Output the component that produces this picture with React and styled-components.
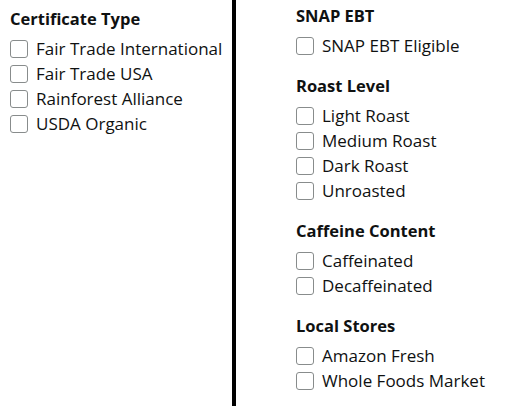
import styled, { createGlobalStyle } from 'styled-components';

const GlobalStyle = createGlobalStyle`
   body {
      margin: 0;
      background: #fff;
      font-family: "Open Sans", "Liberation Sans", sans-serif;
      color: #0f1111;
   }
`;

const Page = styled.div`
   display: flex;
   flex-direction: row;
   width: 512px;
   height: 411px;
`;

const Column = styled.div`
   display: flex;
   flex-direction: column;
   gap: 17px;
   width: ${(p) => p.width}px;
   padding-left: ${(p) => p.inset}px;
   padding-top: ${(p) => p.top}px;
   box-sizing: border-box;
`;

const Divider = styled.div`
   width: 4px;
   height: 406px;
   background: #000;
   flex-shrink: 0;
`;

const Group = styled.div`
   display: flex;
   flex-direction: column;
`;

const Heading = styled.h3`
   margin: 0 0 6px 0;
   font-size: 16.5px;
   font-weight: 700;
   line-height: 22px;
   color: #0f1111;
`;

const Option = styled.label`
   display: flex;
   flex-direction: row;
   align-items: center;
   gap: 8px;
   height: 25px;
   font-size: 17px;
   color: #0f1111;
   white-space: nowrap;
`;

const Box = styled.span`
   display: inline-block;
   width: 16px;
   height: 16px;
   border: 1px solid #888c8c;
   border-radius: 3px;
   background: #fff;
   flex-shrink: 0;
`;

const Filter = ({ title, options }) => (
   <Group>
      <Heading>{title}</Heading>
      {options.map((o) => (
         <Option key={o}>
            <Box />
            {o}
         </Option>
      ))}
   </Group>
);

const left = [
   { title: 'Certificate Type', options: ['Fair Trade International', 'Fair Trade USA', 'Rainforest Alliance', 'USDA Organic'] },
];

const right = [
   { title: 'SNAP EBT', options: ['SNAP EBT Eligible'] },
   { title: 'Roast Level', options: ['Light Roast', 'Medium Roast', 'Dark Roast', 'Unroasted'] },
   { title: 'Caffeine Content', options: ['Caffeinated', 'Decaffeinated'] },
   { title: 'Local Stores', options: ['Amazon Fresh', 'Whole Foods Market'] },
];

export default function App() {
   return (
      <>
         <GlobalStyle />
         <Page>
            <Column width={232} inset={10} top={8}>
               {left.map((g) => (
                  <Filter key={g.title} {...g} />
               ))}
            </Column>
            <Divider />
            <Column width={276} inset={60} top={5}>
               {right.map((g) => (
                  <Filter key={g.title} {...g} />
               ))}
            </Column>
         </Page>
      </>
   );
}
